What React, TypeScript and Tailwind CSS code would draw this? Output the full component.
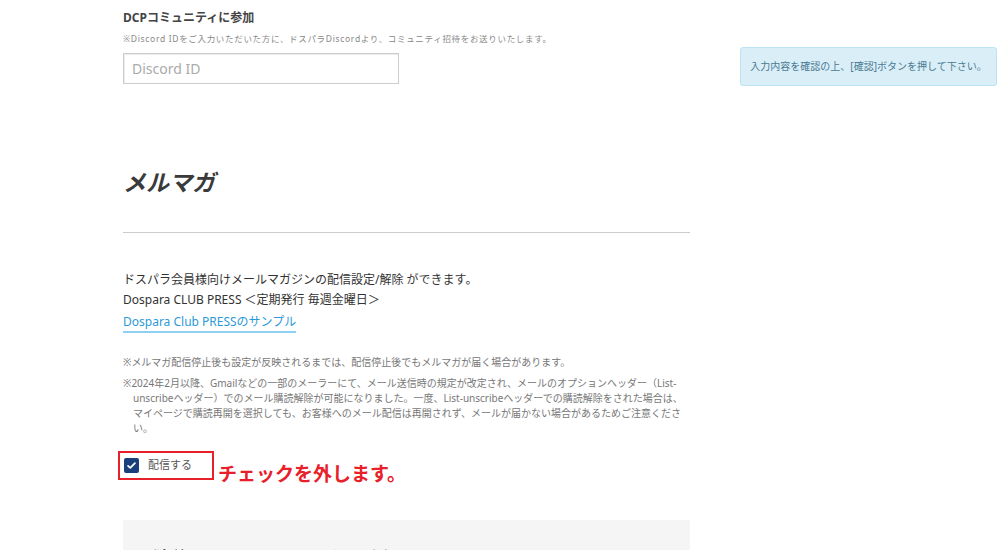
const FONT = { fontFamily: '"Noto Sans", "Noto Sans CJK JP", sans-serif' };

function Note({ children }: { children: React.ReactNode }) {
  return (
    <p className="pl-[1em] -indent-[1em] text-[10px] leading-[15px] text-[#777]">
      ※{children}
    </p>
  );
}

export default function App() {
  return (
    <div className="flex w-[1000px] h-[550px] overflow-hidden bg-white text-[#333]" style={FONT}>
      <div className="ml-[123px] w-[567px] shrink-0">
        <h3 className="pt-[10px] text-[12px] leading-[16px] font-bold text-[#444]">DCPコミュニティに参加</h3>
        <p className="mt-[6px] text-[8.5px] leading-[14px] tracking-[0.08em] text-[#888]">
          ※Discord IDをご入力いただいた方に、ドスパラDiscordより、コミュニティ招待をお送りいたします。
        </p>
        <input
          className="mt-[7px] block h-[31px] w-[276px] border border-[#ccc] px-[8px] text-[14px] text-[#333] placeholder:text-[#aaa] shadow-[inset_1px_1px_1px_rgba(0,0,0,0.08)] outline-none"
          placeholder="Discord ID"
        />

        <h2 className="mt-[80px] text-[23px] leading-[36px] font-bold italic text-[#3a3a3a]">メルマガ</h2>
        <hr className="mt-[32px] border-0 border-t border-[#ccc]" />

        <div className="mt-[37px] text-[12px] leading-[20px] text-[#333]">
          <p>ドスパラ会員様向けメールマガジンの配信設定/解除 ができます。</p>
          <p>Dospara CLUB PRESS ＜定期発行 毎週金曜日＞</p>
          <a href="#" className="mt-[3px] inline-block text-[#2c9ad8] border-b-2 border-[#8fd0f2] leading-[18px]">
            Dospara Club PRESSのサンプル
          </a>
        </div>

        <div className="mt-[22px] flex flex-col gap-[6px]">
          <Note>メルマガ配信停止後も設定が反映されるまでは、配信停止後でもメルマガが届く場合があります。</Note>
          <Note>
            2024年2月以降、Gmailなどの一部のメーラーにて、メール送信時の規定が改定され、メールのオプションヘッダー（List-unscribeヘッダー）でのメール購読解除が可能になりました。一度、List-unscribeヘッダーでの購読解除をされた場合は、マイページで購読再開を選択しても、お客様へのメール配信は再開されず、メールが届かない場合があるためご注意ください。
          </Note>
        </div>

        <div className="mt-[15px] -ml-[5px] flex items-end">
          <label className="flex h-[29px] w-[96px] items-center gap-[9px] border-2 border-[#e8202a] pl-[4px]">
            <span className="flex h-[15px] w-[15px] items-center justify-center rounded-[2px] bg-[#1b3f7c]">
              <svg viewBox="0 0 16 16" className="h-[11px] w-[11px]" fill="none" stroke="white" strokeWidth="2.6" strokeLinecap="round" strokeLinejoin="round">
                <path d="M3 8.5l3.2 3L13 4.5" />
              </svg>
            </span>
            <span className="text-[11px] text-[#555]">配信する</span>
          </label>
          <span className="ml-[4px] mb-[-7px] text-[19px] leading-[26px] font-bold text-[#e8202a]">チェックを外します。</span>
        </div>

        <div className="mt-[40px] h-[60px] bg-[#f5f5f5] pl-[25px] pt-[25px]">
          <p className="text-[13px] leading-[20px] text-[#444]">登録済みのメールアドレスはこちらになります。</p>
        </div>
      </div>

      <div className="ml-[50px] mt-[47px] h-[39px] w-[257px] shrink-0 rounded-[3px] border border-[#bce3f0] bg-[#d9eef7] flex items-center justify-center">
        <p className="text-[10px] text-[#4a7a93]">入力内容を確認の上、[確認]ボタンを押して下さい。</p>
      </div>
    </div>
  );
}
